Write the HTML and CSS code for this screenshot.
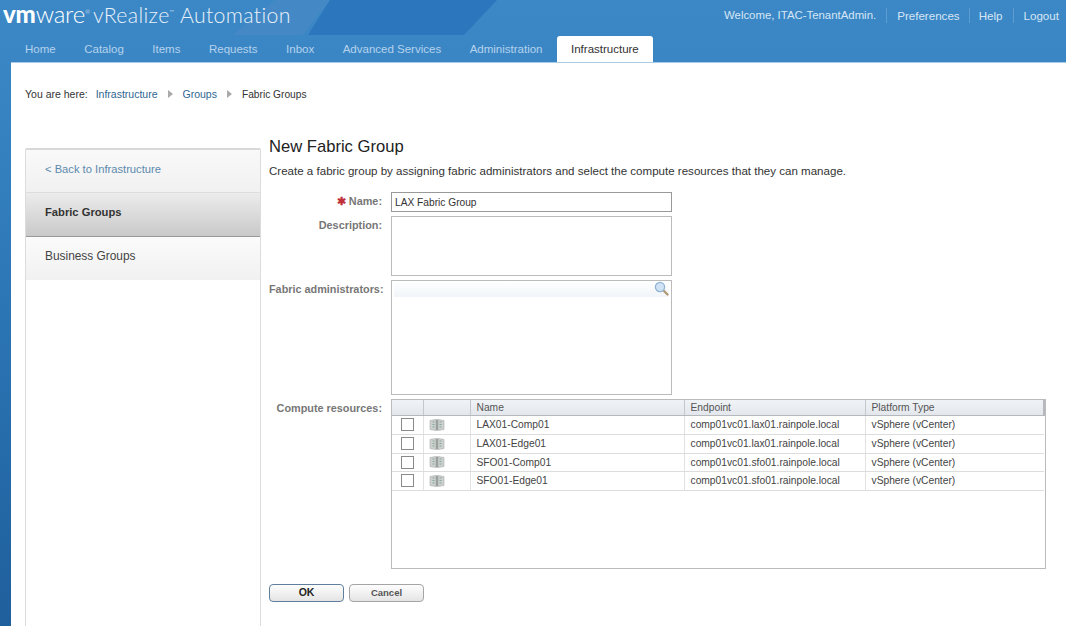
FILE: index.html
```html
<!DOCTYPE html>
<html>

<head>
    <title>New Fabric Group</title>
    <link rel="stylesheet" href="styles.css">
</head>

<body>
	<svg class="banner-art" width="520" height="36" viewBox="0 0 520 36">
		<polygon points="233,35 275,0 330,0 303,35" fill="#4489c6"/>
		<polygon points="308,35 330,0 497,0 464,35" fill="#2b76bc"/>
	</svg>
	<div class="banner">
		<div class="brand"><span class="logo"><b>vm</b>ware<sup>®</sup></span> <span class="product">vRealize<sup>™</sup> Automation</span></div>
		<div class="user-links">
			<span class="welcome">Welcome, ITAC-TenantAdmin.</span>
			<a>Preferences</a>
			<a class="help">Help</a>
			<a>Logout</a>
		</div>
	</div>
	<div class="tabs">
		<a>Home</a>
		<a>Catalog</a>
		<a>Items</a>
		<a>Requests</a>
		<a>Inbox</a>
		<a>Advanced Services</a>
		<a>Administration</a>
		<a class="active">Infrastructure</a>
	</div>

	<div class="page">
		<div class="crumbs">
			<span class="here">You are here:</span>
			<a>Infrastructure</a><i class="arrow"></i>
			<a>Groups</a><i class="arrow"></i>
			<span class="last">Fabric Groups</span>
		</div>

		<div class="columns">
			<div class="sidenav">
				<a class="back">&lt; Back to Infrastructure</a>
				<a class="current">Fabric Groups</a>
				<a class="other">Business Groups</a>
			</div>

			<div class="content">
				<h1>New Fabric Group</h1>
				<p class="intro">Create a fabric group by assigning fabric administrators and select the compute resources that they can manage.</p>

				<div class="form">
					<label class="name-label"><span class="req">✱</span> Name:</label>
					<div class="field name-field">LAX Fabric Group</div>

					<label>Description:</label>
					<div class="field desc-field"></div>

					<label>Fabric administrators:</label>
					<div class="field admin-field">
						<div class="search-row">
							<svg width="15" height="15" viewBox="0 0 15 15">
								<line x1="8.5" y1="8.5" x2="13.5" y2="13.5" stroke="#b09a78" stroke-width="2.4" stroke-linecap="round"/>
								<circle cx="6" cy="6" r="4.6" fill="#cfe3f5" stroke="#8fb2d3" stroke-width="1.2"/>
							</svg>
						</div>
					</div>

					<label>Compute resources:</label>
					<div class="field grid-field">
						<table>
							<tr>
								<th class="c-check"></th><th class="c-icon"></th><th class="c-name">Name</th><th class="c-end">Endpoint</th><th>Platform Type</th>
							</tr>
							<tr>
								<td class="mid"><span class="box"></span></td>
								<td class="mid"><svg class="res-icon" width="16" height="14" viewBox="0 0 16 13"><use href="#cluster"/></svg></td>
								<td>LAX01-Comp01</td><td>comp01vc01.lax01.rainpole.local</td><td>vSphere (vCenter)</td>
							</tr>
							<tr>
								<td class="mid"><span class="box"></span></td>
								<td class="mid"><svg class="res-icon" width="16" height="14" viewBox="0 0 16 13"><use href="#cluster"/></svg></td>
								<td>LAX01-Edge01</td><td>comp01vc01.lax01.rainpole.local</td><td>vSphere (vCenter)</td>
							</tr>
							<tr class="short-row">
								<td class="mid"><span class="box"></span></td>
								<td class="mid"><svg class="res-icon" width="16" height="14" viewBox="0 0 16 13"><use href="#cluster"/></svg></td>
								<td>SFO01-Comp01</td><td>comp01vc01.sfo01.rainpole.local</td><td>vSphere (vCenter)</td>
							</tr>
							<tr>
								<td class="mid"><span class="box"></span></td>
								<td class="mid"><svg class="res-icon" width="16" height="14" viewBox="0 0 16 13"><use href="#cluster"/></svg></td>
								<td>SFO01-Edge01</td><td>comp01vc01.sfo01.rainpole.local</td><td>vSphere (vCenter)</td>
							</tr>
						</table>
					</div>
				</div>

				<div class="buttons">
					<button class="ok">OK</button>
					<button class="cancel">Cancel</button>
				</div>
			</div>
		</div>
	</div>

	<svg width="0" height="0" class="defs">
		<defs>
			<g id="cluster">
				<path d="M1 2 L7 1 V12 L1 11 Z" fill="#ccd0ce" stroke="#a8adab" stroke-width=".6"/>
				<path d="M15 2 L9 1 V12 L15 11 Z" fill="#ccd0ce" stroke="#a8adab" stroke-width=".6"/>
				<rect x="7" y="1" width="2" height="11" fill="#9aa09e"/>
				<path d="M3.5 3.5h2M3.5 6h2M3.5 8.5h2M10.5 3.5h2M10.5 6h2M10.5 8.5h2" stroke="#86a899" stroke-width="1.2"/>
			</g>
		</defs>
	</svg>
</body>

</html>
```

FILE: styles.css
```css
body {
	margin: 0;
	height: 626px;
	overflow: hidden;
	font-family: "Liberation Sans", Arial, sans-serif;
	font-size: 11px;
	color: #333;
	background: linear-gradient(to bottom, #3c87c5 0, #3a86c5 60px, #2c76b6 300px, #1f5f9c 626px);
}

.defs {
	position: absolute;
}

.banner-art {
	position: absolute;
	top: 0;
	left: 0;
}

.banner {
	position: relative;
	height: 36px;
	display: flex;
	justify-content: space-between;
	align-items: center;
}

.brand {
	display: flex;
	align-items: baseline;
	padding-left: 3px;
	margin-top: -10px;
	color: #eaf2fa;
	font-family: Lato, "Liberation Sans", sans-serif;
	white-space: nowrap;
}

.logo {
	font-size: 24px;
	font-weight: 300;
	letter-spacing: -0.2px;
	color: #fff;
	width: 90px;
}

.logo b {
	font-weight: 900;
}

.brand sup {
	font-size: 6px;
	vertical-align: 9px;
	line-height: 0;
}

.product {
	font-size: 21.3px;
	font-weight: 300;
	letter-spacing: 0.35px;
}

.user-links {
	display: flex;
	align-items: center;
	margin-top: -6px;
	padding-right: 7px;
	font-size: 11.6px;
	color: #d5e6f5;
}

.welcome {
	font-size: 11.4px;
}

.user-links a {
	border-left: 1px solid #5d9dd2;
	padding-left: 10px;
	margin-left: 10px;
	line-height: 15px;
}

.user-links .help {
	margin-left: 9px;
	padding-left: 9px;
}

.tabs {
	position: relative;
	height: 26px;
	display: flex;
	padding-left: 11px;
	font-size: 11.5px;
	color: #b5d2ec;
}

.tabs a {
	padding: 0 14px;
	margin-right: 0.5px;
	line-height: 26px;
}

.tabs a.active {
	background: white;
	color: #333;
	border-radius: 3px 3px 0 0;
}

.page {
	margin-left: 11px;
	height: 564px;
	background: white;
	border-top: 1px solid #a9cbe6;
	box-sizing: border-box;
}

.crumbs {
	display: flex;
	align-items: center;
	height: 14px;
	margin-top: 24px;
	padding-left: 14px;
	font-size: 10.5px;
	color: #333;
}

.crumbs a {
	color: #2f6690;
}

.here {
	margin-right: 8px;
}

.last {
	font-size: 10.2px;
}

.arrow {
	width: 0;
	height: 0;
	margin: 0 10px;
	border-left: 5px solid #aaa;
	border-top: 4px solid transparent;
	border-bottom: 4px solid transparent;
}

.columns {
	display: flex;
	margin-top: 47px;
	padding-left: 14px;
}

.sidenav {
	width: 236px;
	height: 480px;
	flex: none;
	border: 1px solid #dcdcdc;
	border-top: 2px solid #d8d8d8;
	border-bottom: none;
	border-radius: 2px 2px 0 0;
	box-sizing: border-box;
	font-size: 11.9px;
}

.sidenav a {
	display: block;
	height: 43px;
	line-height: 39px;
	padding-left: 19px;
	box-sizing: border-box;
}

.sidenav .back {
	color: #5c8aae;
	font-size: 11.2px;
	background: linear-gradient(to bottom, #f9f9f9, #f1f1f1);
	border-bottom: 1px solid #ddd;
}

.sidenav .current {
	height: 44px;
	font-size: 11.2px;
	font-weight: bold;
	color: #333;
	background: linear-gradient(to bottom, #ececec, #c9c9c9);
	border-bottom: 1px solid #999;
}

.other {
	color: #444;
	background: linear-gradient(to bottom, #fbfbfb, #f1f1f1);
}

.content {
	margin-left: 8px;
	width: 780px;
}

h1 {
	margin: -12px 0 0 0;
	height: 22px;
	font-size: 16.6px;
	line-height: 22px;
	font-weight: normal;
	color: #222;
}

.intro {
	margin: 6px 0 0 0;
	height: 14px;
	font-size: 11.56px;
	line-height: 14px;
	color: #333;
	white-space: nowrap;
}

.form {
	display: grid;
	grid-template-columns: 114px 655px;
	column-gap: 8px;
	row-gap: 4px;
	margin-top: 14px;
}

.form label {
	text-align: right;
	font-size: 10.85px;
	font-weight: bold;
	color: #777;
	padding: 3px 1px 0 0;
	white-space: nowrap;
}

.req {
	color: #c0303a;
}

.field {
	box-sizing: border-box;
	width: 281px;
	border: 1px solid #aaa;
	background: white;
}

.name-field {
	height: 20px;
	padding-left: 3px;
	line-height: 20px;
	font-size: 10.2px;
	color: #333;
	border-color: #999;
}

.desc-field {
	height: 60px;
	border-color: #bbb;
}

.admin-field {
	height: 115px;
	border-color: #bbb;
}

.search-row {
	display: flex;
	justify-content: flex-end;
	height: 16px;
	margin: 0 2px 0 2px;
	background: linear-gradient(to bottom, #fff, #f1f5f9);
}

.grid-field {
	width: 655px;
	height: 170px;
	border-color: #bbb;
}

table {
	width: 100%;
	table-layout: fixed;
	border-collapse: collapse;
	font-size: 10.25px;
	color: #444;
}

th {
	box-sizing: border-box;
	height: 15px;
	padding: 0 0 0 6px;
	text-align: left;
	font-weight: normal;
	color: #555;
	background: linear-gradient(to bottom, #f0f3f6, #e3e7ec);
	border-left: 1px solid #c4c8cc;
	border-bottom: 1px solid #b5b9bd;
}

th:first-child,
td:first-child {
	border-left: none;
}

th:last-child {
	border-right: 2px solid #b5b9bd;
}

td {
	height: 18px;
	padding: 0 0 0 6px;
	border-left: 1px solid #e2e2e2;
	border-bottom: 1px solid #ddd;
	white-space: nowrap;
}

.short-row td {
	height: 17px;
}

td.mid {
	padding: 0;
	text-align: center;
}

.c-check {
	width: 31px;
}

.c-icon {
	width: 47px;
}

.c-name {
	width: 214px;
}

.c-end {
	width: 181px;
}

.box {
	display: block;
	width: 11px;
	height: 11px;
	margin: 0 auto;
	border: 1px solid #8a8a8a;
	background: white;
}

.res-icon {
	display: block;
	margin: 0 auto 0 5px;
}

.buttons {
	display: flex;
	gap: 5px;
	margin-top: 15px;
}

button {
	width: 75px;
	height: 18px;
	padding: 0 0 2px 0;
	border-radius: 4px;
	font-family: "Liberation Sans", Arial, sans-serif;
	font-size: 10.5px;
	background: linear-gradient(to bottom, #fdfdfd, #e4e4e4);
	color: #333;
}

.ok {
	border: 1px solid #5f7f9c;
	font-weight: bold;
	color: #222;
}

.cancel {
	border: 1px solid #a5a5a5;
	font-size: 9.5px;
	font-weight: bold;
	color: #555;
}
```
